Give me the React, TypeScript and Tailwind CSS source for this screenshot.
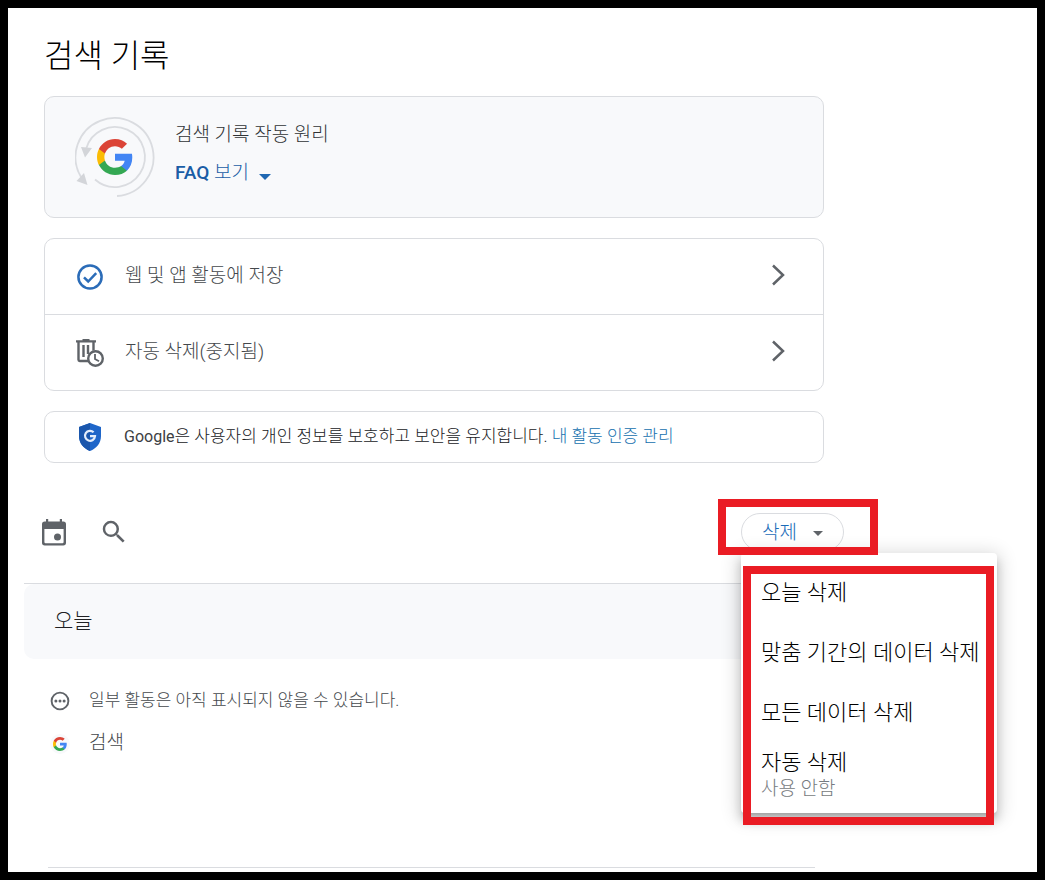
import type { ReactNode } from "react";
import { MdSearch } from "react-icons/md";

const deleteOptions = [
  { label: "오늘 삭제" },
  { label: "맞춤 기간의 데이터 삭제" },
  { label: "모든 데이터 삭제" },
  { label: "자동 삭제", note: "사용 안함" },
];

function GoogleG({ className }: { className?: string }) {
  return (
    <svg viewBox="2 2 44 44" className={className} aria-hidden="true">
      <path fill="#4285F4" d="M45.12 24.5c0-1.56-.14-3.06-.4-4.5H24v8.51h11.84c-.51 2.75-2.06 5.08-4.39 6.64v5.52h7.11c4.16-3.83 6.56-9.47 6.56-16.17z" />
      <path fill="#34A853" d="M24 46c5.94 0 10.92-1.97 14.56-5.33l-7.11-5.52c-1.97 1.32-4.49 2.1-7.45 2.1-5.73 0-10.58-3.87-12.31-9.07H4.34v5.7C7.96 41.07 15.4 46 24 46z" />
      <path fill="#FBBC05" d="M11.69 28.18C11.25 26.86 11 25.45 11 24s.25-2.86.69-4.18v-5.7H4.34C2.85 17.09 2 20.45 2 24s.85 6.91 2.34 9.88l7.35-5.7z" />
      <path fill="#DB4437" d="M24 10.75c3.23 0 6.13 1.11 8.41 3.29l6.31-6.31C34.91 4.18 29.93 2 24 2 15.4 2 7.96 6.93 4.34 14.12l7.35 5.7c1.73-5.2 6.58-9.07 12.31-9.07z" />
    </svg>
  );
}

function HistoryLogo() {
  return (
    <div className="relative grid size-20 shrink-0 place-items-center">
      <svg viewBox="0 0 80 80" className="absolute inset-0 size-20" fill="none" aria-hidden="true">
        <g stroke="#dadce0" strokeWidth="1.8">
          <path d="M42 79A39 39 0 1 0 6 60" />
          <path d="M20 62.500A30 30 0 1 0 11 32" />
        </g>
        <path fill="#d3d5d9" d="M6 30l11 1-7 9.500zM1.500 64l7.500-8 3.500 12z" />
      </svg>
      <GoogleG className="size-9" />
    </div>
  );
}

function CheckIcon() {
  return (
    <svg viewBox="0 0 28 28" className="size-7" fill="none" stroke="#2b6cb8" strokeWidth="2.500" aria-hidden="true">
      <circle cx="14" cy="14" r="11.600" />
      <path d="M8 14.300l4.200 4.200 8-8.300" />
    </svg>
  );
}

function AutoDeleteIcon() {
  return (
    <svg viewBox="0 0 28 28" className="size-7" fill="none" stroke="#5f6368" strokeWidth="2.400" aria-hidden="true">
      <path d="M0 2.400h20M6.500 1.300h7" />
      <path d="M2.500 2.400v18.400q0 1.200 1.200 1.200h9M17.500 2.400v9M7.500 6v12M12 6v9" />
      <circle cx="19.500" cy="19.500" r="7.300" fill="#fff" />
      <path d="M19 15v5l4 2.300" strokeWidth="1.800" />
    </svg>
  );
}

function ShieldIcon() {
  return (
    <svg viewBox="0 0 22 28" className="h-7 w-[22px]" aria-hidden="true">
      <path fill="#1f66c9" d="M11 0l11 4v9c0 7-4.500 12.500-11 15C4.500 25.500 0 20 0 13V4z" />
      <path fill="#1a56ac" d="M11 0v28C4.500 25.500 0 20 0 13V4z" />
      <path fill="none" stroke="#e3edfb" strokeWidth="2.200" d="M14.600 9.300A5 5 0 1 0 16 13.200H11" />
    </svg>
  );
}

function CalendarIcon() {
  return (
    <svg viewBox="0 0 24 27" className="h-[27px] w-6" fill="#5f6368" aria-hidden="true">
      <path d="M4 0h2.200v2.500h11.600V0H20v2.500h1.300Q24 2.500 24 5.200v18.600q0 2.700-2.700 2.700H2.700Q0 26.500 0 23.800V5.200q0-2.700 2.700-2.700H4zM2.400 10v13q0 1.200 1.200 1.200h16.800q1.200 0 1.200-1.200V10z" fillRule="evenodd" />
      <circle cx="15.500" cy="18" r="3.500" />
    </svg>
  );
}

function PendingIcon() {
  return (
    <svg viewBox="0 0 20 20" className="size-5" fill="#5f6368" aria-hidden="true">
      <circle cx="10" cy="10" r="8.400" fill="none" stroke="#5f6368" strokeWidth="1.900" />
      <circle cx="5.900" cy="10" r="1.500" />
      <circle cx="10" cy="10" r="1.500" />
      <circle cx="14.100" cy="10" r="1.500" />
    </svg>
  );
}

function SettingRow({ icon, label }: { icon: ReactNode; label: string }) {
  return (
    <button type="button" className="flex h-[75px] w-full items-center pr-[38px] pl-[31px] text-left first:h-[76px]">
      {icon}
      <span className="ml-[21px] flex-1 pb-0.5 text-[19px] leading-7 text-[#44484c]">{label}</span>
      <svg viewBox="0 0 14 22" className="mb-1 h-[22px] w-3.5" fill="none" stroke="#5f6368" strokeWidth="2.500" aria-hidden="true">
        <path d="M2 1.500L12 11 2 20.500" />
      </svg>
    </button>
  );
}

function DeleteMenu() {
  return (
    <div className="relative">
      <button
        type="button"
        aria-haspopup="menu"
        aria-expanded="true"
        className="flex h-[38px] w-[103px] items-center rounded-full border border-[#dadce0] pt-0.5 pl-5 text-[19px] text-[#1a6bb8]"
      >
        삭제
        <svg viewBox="0 0 10 5" className="ml-4 h-[5px] w-2.5" fill="#5f6368" aria-hidden="true">
          <path d="M0 0h10L5 5z" />
        </svg>
      </button>

      <div
        role="menu"
        className="absolute top-10 left-0 z-10 w-64 rounded bg-white py-2 shadow-[0_5px_5px_-3px_rgba(0,0,0,0.2),0_8px_10px_1px_rgba(0,0,0,0.14),0_3px_18px_4px_rgba(0,0,0,0.14)]"
      >
        {deleteOptions.map(({ label, note }) => (
          <button
            key={label}
            type="button"
            role="menuitem"
            className={`flex w-full flex-col justify-center px-5 pt-1 text-left text-[22px] leading-7 whitespace-nowrap text-black ${note ? "h-16" : "h-[60px]"}`}
          >
            {label}
            {note && <span className="text-[19px] leading-6 text-[#777b80]">{note}</span>}
          </button>
        ))}
      </div>

      {/* Highlight frames */}
      <div className="pointer-events-none absolute -top-3.5 -left-[23px] z-20 h-14 w-40 border-8 border-[#ea1c24]" />
      <div className="pointer-events-none absolute top-[53px] left-0.5 z-20 h-[259px] w-[251px] border-8 border-[#ea1c24]" />
    </div>
  );
}

export default function App() {
  return (
    <div className="min-h-screen border-8 border-black bg-white px-4 font-['Roboto','Noto_Sans_CJK_KR',sans-serif] font-light text-[#202124]">
      <main className="max-w-[820px]">
        <div className="px-5">
          <h1 className="pt-7 text-[32px] leading-10 text-black">검색 기록</h1>

          <section className="mt-5 flex h-[122px] items-center rounded-[10px] border border-[#dadce0] bg-[#f8f9fb] pl-[30px]">
            <HistoryLogo />
            <div className="ml-5 pb-1.5">
              <h2 className="text-[19px] leading-7 text-[#303336]">검색 기록 작동 원리</h2>
              <button type="button" className="mt-2.5 flex items-center text-[19px] leading-7 text-[#1a5da6]">
                <span>
                  <span className="font-medium">FAQ</span> 보기
                </span>
                <svg viewBox="0 0 12 6" className="mt-2 ml-2.5 h-1.5 w-3" fill="#1f68b3" aria-hidden="true">
                  <path d="M0 0h12L6 6z" />
                </svg>
              </button>
            </div>
          </section>

          <section className="mt-5 divide-y divide-[#dadce0] rounded-[10px] border border-[#dadce0]">
            <SettingRow icon={<CheckIcon />} label="웹 및 앱 활동에 저장" />
            <SettingRow icon={<AutoDeleteIcon />} label="자동 삭제(중지됨)" />
          </section>

          <section className="mt-5 flex h-[52px] items-center rounded-[10px] border border-[#dadce0] pl-[34px]">
            <ShieldIcon />
            <p className="ml-[23px] pb-0.5 text-[17px] leading-6 text-[#202124]">
              <span className="text-base font-normal text-[#3c4043]">Google</span>은 사용자의 개인 정보를 보호하고 보안을 유지합니다.{" "}
              <a href="#verification" className="text-[#146fae]">
                내 활동 인증 관리
              </a>
            </p>
          </section>
        </div>

        <div className="mt-[50px] flex items-center border-b border-[#dadce0] pb-8 pl-[18px]">
          <button type="button" aria-label="날짜별 필터">
            <CalendarIcon />
          </button>
          <button type="button" aria-label="활동 검색" className="ml-[33px]">
            <MdSearch className="size-[30px] text-[#5f6368]" />
          </button>
          <div className="ml-auto">
            <DeleteMenu />
          </div>
        </div>

        <h2 className="flex h-[75px] items-center rounded-[10px] bg-[#f8f9fb] pl-[30px] text-[21px]">오늘</h2>

        <ul className="pt-5 pl-[26px] text-[#44484c]">
          <li className="flex h-[43px] items-center">
            <PendingIcon />
            <span className="ml-[19px] text-[17px]">일부 활동은 아직 표시되지 않을 수 있습니다.</span>
          </li>
          <li className="flex h-[43px] items-center">
            <span className="grid size-5 place-items-center rounded-full bg-[#f8f9fb]">
              <GoogleG className="size-3.5" />
            </span>
            <span className="ml-[19px] text-[19px]">검색</span>
          </li>
        </ul>

        <hr className="mt-[102px] mr-[29px] ml-6 border-[#dadce0]" />
      </main>
    </div>
  );
}
